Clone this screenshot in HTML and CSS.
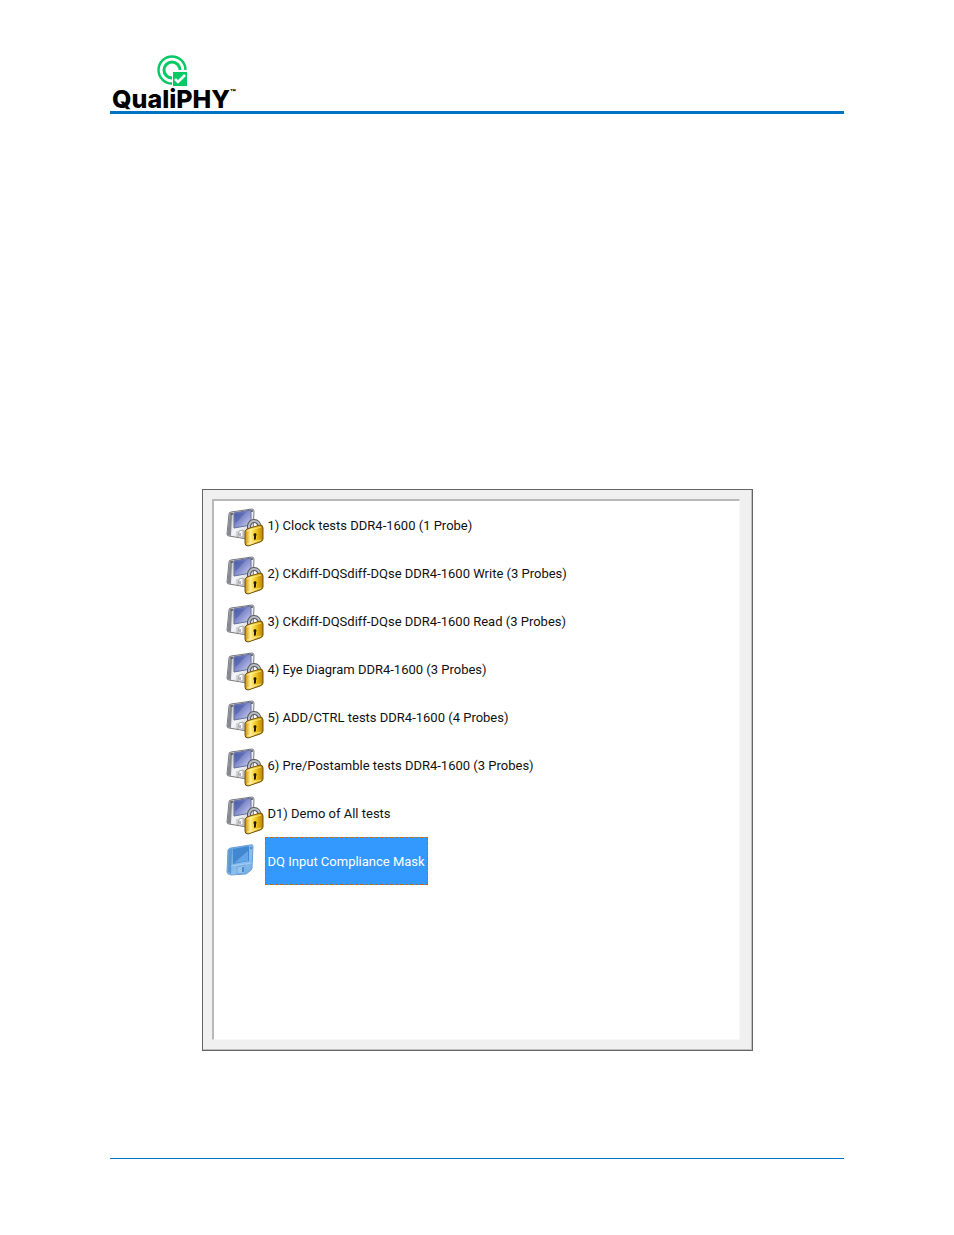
FILE: index.html
```
<!DOCTYPE html>
<html lang="en">

<head>
  <meta charset="utf-8">
  <meta name="viewport" content="width=device-width, initial-scale=1.0">
  <title>QualiPHY</title>
  <link rel="stylesheet" href="styles.css">
</head>

<body>
  <!-- Shared icons -->
  <svg class="defs" aria-hidden="true">
    <defs>
      <linearGradient id="screenFill" x1="0" y1="0" x2="1" y2="1">
        <stop offset="0" stop-color="#4b5fae" />
        <stop offset="0.5" stop-color="#8790ce" />
        <stop offset="1" stop-color="#d4d8f6" />
      </linearGradient>
      <linearGradient id="bodyFill" x1="0" y1="0" x2="1" y2="1">
        <stop offset="0" stop-color="#aeb2b8" />
        <stop offset="0.5" stop-color="#f6f6f8" />
        <stop offset="1" stop-color="#c4c6cc" />
      </linearGradient>
      <linearGradient id="lockFill" x1="0" y1="0" x2="1" y2="0">
        <stop offset="0" stop-color="#c98a08" />
        <stop offset="0.3" stop-color="#fff08a" />
        <stop offset="0.6" stop-color="#f2c81c" />
        <stop offset="1" stop-color="#b97f04" />
      </linearGradient>
      <linearGradient id="selectedFill" x1="0" y1="0" x2="1" y2="1">
        <stop offset="0" stop-color="#5e9cda" />
        <stop offset="0.6" stop-color="#8dbfee" />
        <stop offset="1" stop-color="#6ea9e0" />
      </linearGradient>
    </defs>
    <symbol id="device" viewBox="0 0 39 48">
      <path d="M5 11 L26 8 Q28 8 28 10 L27 32 L21 38 L3 35 Q1 35 1 33 L3 13 Q3 11 5 11 Z" fill="url(#bodyFill)" stroke="#777b82" />
      <path d="M4 12 L6 12 L5 35 L1 34 Z" fill="#85898f" />
      <path d="M8 12 L25 9 L25 24 L8 27 Z" fill="url(#screenFill)" stroke="#666f9c" />
      <path d="M9 13 L20 11 L11 21 L9 22 Z" fill="#374c9c" opacity="0.4" />
      <path d="M11 30 V36 M18 29 V37" stroke="#b2b4ba" fill="none" />
      <path d="M13 30 L17 29 L17 36 L12 36 Z" fill="#fff" stroke="#aaa" />
      <path d="M14 32 V35" stroke="#777" />
      <circle cx="6" cy="13" r="1" fill="#555" />
      <circle cx="26" cy="10" r="1" fill="#555" />
    </symbol>
    <symbol id="lock" viewBox="0 0 39 48">
      <path d="M23 29 V25 Q24 20 28 20 Q33 20 34 27" fill="none" stroke="#55585c" stroke-width="4" />
      <path d="M23 28 V25 Q24 20 28 20 Q33 20 34 26" fill="none" stroke="#b9bcc0" stroke-width="2" />
      <path d="M19 31 Q19 29 21 28 L34 24 Q37 24 37 27 V38 Q37 40 34 41 L22 45 Q19 45 19 42 Z" fill="url(#lockFill)" stroke="#74510c" />
      <path d="M21 30 L35 26 M21 43 L35 39" stroke="#fff3a0" opacity="0.7" />
      <path d="M29 32 A2 2 0 0 1 30 35 V38 L28 39 V35 A2 2 0 0 1 29 32 Z" fill="#241a04" />
    </symbol>
    <symbol id="deviceSelected" viewBox="0 0 39 48">
      <path d="M5 11 L24 8 Q27 7 27 9 L26 31 Q26 33 24 34 L20 37 L5 38 Q1 37 1 35 L2 13 Q3 11 5 11 Z" fill="url(#selectedFill)" stroke="#6aa0d6" />
      <path d="M3 13 L2 35 L5 37 L6 12 Z" fill="#5a96d4" />
      <path d="M7 12 L23 9 L23 24 L7 27 Z" fill="#4287d2" />
      <path d="M8 26 L22 14 L22 24 Z" fill="#64a5e7" />
      <path d="M5 29 L26 26" stroke="#a4ccf1" />
      <path d="M11 30 L19 28 L19 36 L11 37 Z" fill="#95c4ef" stroke="#6fa7dc" />
      <path d="M17 30 V35" stroke="#4b8bcd" stroke-width="2" />
      <circle cx="25" cy="11" r="1" fill="#397ac0" />
    </symbol>
  </svg>

  <div class="page">
    <header class="header">
      <div class="logo">
        <svg class="logo-mark" viewBox="0 0 32 32" aria-hidden="true">
          <circle cx="15" cy="15" r="13.5" fill="none" stroke="#06c864" stroke-width="2.4" />
          <circle cx="15" cy="15" r="8" fill="none" stroke="#06c864" stroke-width="3" />
          <path d="M15 15 H32 V32 H15 Z" fill="#fff" />
          <path d="M16 17 H30 V31 H16 Z" fill="#06c864" />
          <path d="M18 24 L21 27 L28 20" fill="none" stroke="#fff" stroke-width="2.6" />
        </svg>
        <div class="logo-name">QualiPHY<span class="tm">™</span></div>
      </div>
    </header>

    <main class="content">
      <div class="panel">
        <ul class="tests">
          <li><button class="test"><svg class="icon"><use href="#device" /><use href="#lock" /></svg><span class="label">1) Clock tests DDR4-1600 (1 Probe)</span></button></li>
          <li><button class="test"><svg class="icon"><use href="#device" /><use href="#lock" /></svg><span class="label">2) CKdiff-DQSdiff-DQse DDR4-1600 Write (3 Probes)</span></button></li>
          <li><button class="test"><svg class="icon"><use href="#device" /><use href="#lock" /></svg><span class="label">3) CKdiff-DQSdiff-DQse DDR4-1600 Read (3 Probes)</span></button></li>
          <li><button class="test"><svg class="icon"><use href="#device" /><use href="#lock" /></svg><span class="label">4) Eye Diagram DDR4-1600 (3 Probes)</span></button></li>
          <li><button class="test"><svg class="icon"><use href="#device" /><use href="#lock" /></svg><span class="label">5) ADD/CTRL tests DDR4-1600 (4 Probes)</span></button></li>
          <li><button class="test"><svg class="icon"><use href="#device" /><use href="#lock" /></svg><span class="label">6) Pre/Postamble tests DDR4-1600 (3 Probes)</span></button></li>
          <li><button class="test"><svg class="icon"><use href="#device" /><use href="#lock" /></svg><span class="label">D1) Demo of All tests</span></button></li>
          <li><button class="test selected" aria-pressed="true"><svg class="icon"><use href="#deviceSelected" /></svg><span class="label">DQ Input Compliance Mask</span></button></li>
        </ul>
      </div>
    </main>

    <footer class="footer"></footer>
  </div>
</body>

</html>
```

FILE: styles.css
```
* {
  box-sizing: border-box;
}

body {
  margin: 0;
  background-color: #fff;
  color: #111;
  font-family: Roboto, 'Liberation Sans', sans-serif;
}

.defs {
  position: absolute;
  width: 0;
  height: 0;
}

.page {
  min-height: 100vh;
  padding: 55px 110px 76px;
  display: flex;
  flex-direction: column;
}

.header {
  border-bottom: 3px solid #0074c4;
}

.logo {
  height: 56px;
  padding-left: 2px;
}

.logo-mark {
  display: block;
  width: 32px;
  height: 32px;
  margin-left: 45px;
}

.logo-name {
  display: flex;
  color: #000;
  font-family: Inter, 'Liberation Sans', sans-serif;
  font-size: 25px;
  font-weight: 800;
  line-height: 24px;
}

.tm {
  font-size: 9px;
  line-height: 12px;
}

.content {
  flex: 1;
  padding: 375px 0 107px;
  display: flex;
  justify-content: center;
}

.panel {
  width: 100%;
  max-width: 551px;
  padding: 9px 12px 10px 9px;
  display: flex;
  background-color: #f0f0f0;
  border: 1px solid #646464;
  box-shadow: inset -1px -1px #c0c0c0;
}

.tests {
  flex: 1;
  margin: 0;
  padding: 0;
  list-style: none;
  background-color: #fff;
  border: 2px solid #b8b8b8;
  border-right: 1px solid #f8f8f8;
  border-bottom: 1px solid #f8f8f8;
}

.test {
  display: flex;
  width: 100%;
  height: 48px;
  padding: 0 0 0 12px;
  background: none;
  border: none;
  color: inherit;
  font-family: inherit;
  font-size: 13px;
  text-align: left;
  cursor: pointer;
}

.icon {
  flex: none;
  width: 39px;
  height: 48px;
}

.label {
  height: 48px;
  padding: 0 2px;
  border: 1px solid transparent;
  line-height: 48px;
}

.selected .label {
  background-color: #3399ff;
  border: 1px dashed #cc6600;
  color: #fff;
}

.footer {
  border-top: 1px solid #0074c4;
}
```
